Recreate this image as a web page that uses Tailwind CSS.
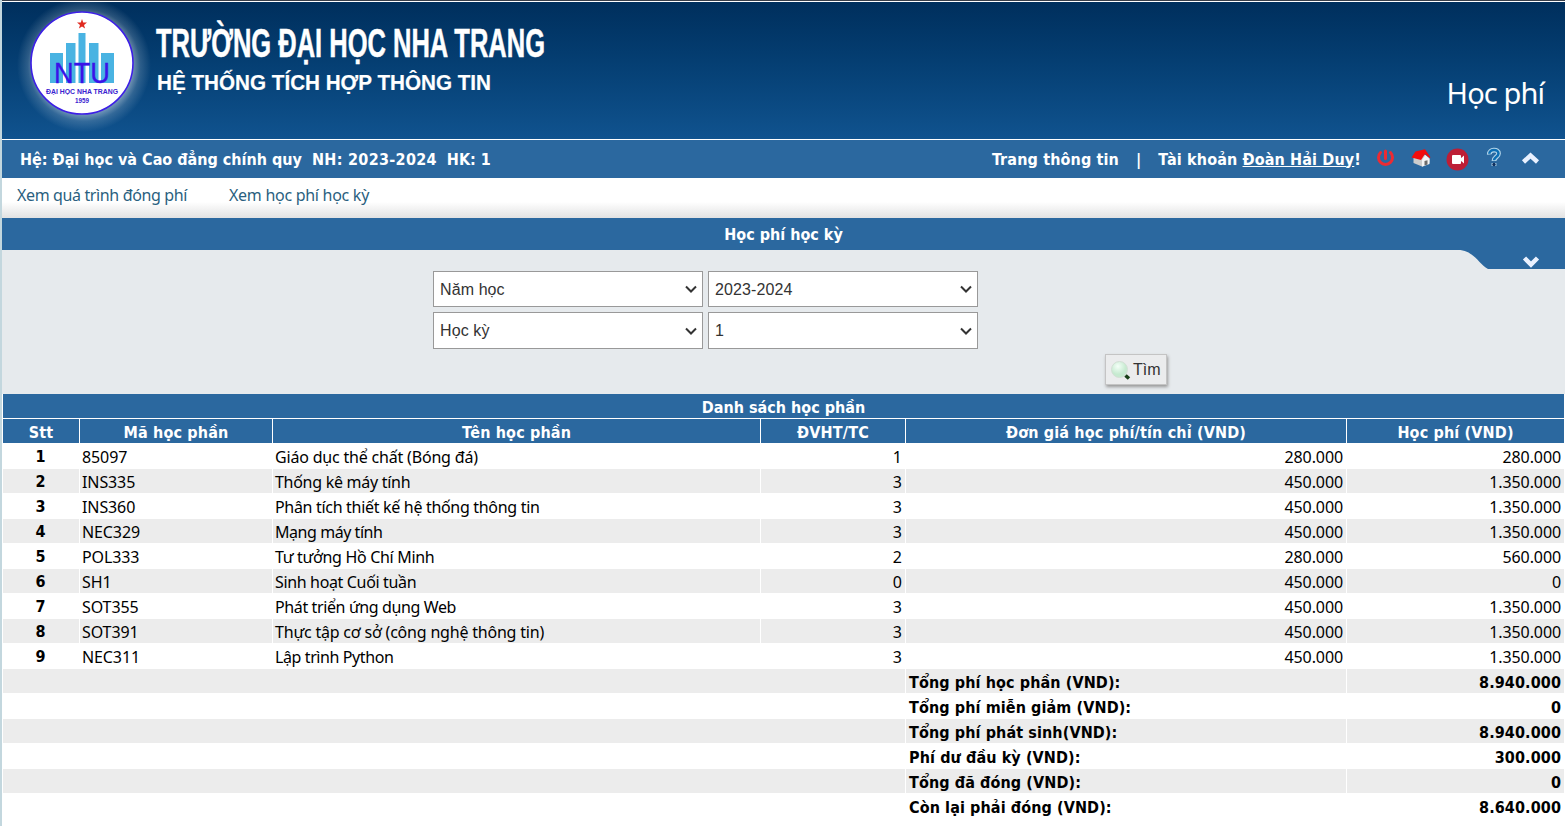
<!DOCTYPE html>
<html lang="vi">
<head>
<meta charset="utf-8">
<title>Học phí</title>
<script src="https://cdn.jsdelivr.net/npm/@tailwindcss/browser@4"></script>
</head>
<body class="h-[826px] overflow-hidden bg-white font-['Noto_Sans',sans-serif] text-[16px] leading-[23px] text-black">
<div class="flex h-[826px] w-[1565px] flex-col border-l-2 border-[#c3d7de]">
  <div class="h-px shrink-0 bg-[#3a3f4a]"></div>
  <header class="flex h-[139px] shrink-0 justify-between border-y border-white bg-linear-to-b from-[#002f5d] to-[#10538f]">
    <div class="flex">
      <svg class="block h-[137px] w-[150px]" viewBox="2 2 150 137">
        <defs><radialGradient id="glow"><stop offset="0.72" stop-color="#fff" stop-opacity=".45"/><stop offset=".84" stop-color="#fff" stop-opacity=".16"/><stop offset="1" stop-color="#fff" stop-opacity="0"/></radialGradient></defs>
        <circle cx="84" cy="65" r="67" fill="url(#glow)"/>
        <circle cx="82" cy="63" r="51" fill="#fff" stroke="#3d1fe6" stroke-width="1.6"/>
        <path fill="#49b3e2" d="M50 53h13v30H50zM66 43h9.500v40H66zM78.500 33h7v50h-7zM89 43h9.500v40H89zM101 53h13v30h-13z"/>
        <path fill="#e02a20" d="M82 19l1.200 3.600h3.800l-3 2.300 1.100 3.700-3.100-2.200-3.100 2.200 1.100-3.700-3-2.300h3.800z"/>
        <text x="54" y="83" textLength="56" lengthAdjust="spacingAndGlyphs" font-family="Liberation Sans" font-size="29" fill="#3a12e8" stroke="#3a12e8" stroke-width=".3">NTU</text>
        <text x="46" y="93.500" textLength="72" lengthAdjust="spacingAndGlyphs" font-family="Liberation Sans" font-weight="700" font-size="7.500" fill="#3a22d0">ĐẠI HỌC NHA TRANG</text>
        <text x="75" y="102.500" textLength="14" lengthAdjust="spacingAndGlyphs" font-family="Liberation Sans" font-weight="700" font-size="6.500" fill="#3a22d0">1959</text>
      </svg>
      <svg class="block h-[137px] w-[420px] overflow-visible" viewBox="152 2 420 137" font-family="Liberation Sans" font-weight="700" fill="#fff">
        <text x="156" y="56.500" textLength="389" lengthAdjust="spacingAndGlyphs" font-size="40.500" stroke="#fff" stroke-width=".5">TRƯỜNG ĐẠI HỌC NHA TRANG</text>
        <text x="157" y="89.500" textLength="334" lengthAdjust="spacingAndGlyphs" font-size="22.500" stroke="#fff" stroke-width=".2">HỆ THỐNG TÍCH HỢP THÔNG TIN</text>
      </svg>
    </div>
    <h1 class="mt-[71px] mr-[21px] text-[29px] leading-10 tracking-[-0.9px] text-white">Học phí</h1>
  </header>

  <div class="flex h-[38px] shrink-0 items-center justify-between bg-[#2b689f] pr-[24px] pl-[18px] font-['DejaVu_Sans_Condensed'] font-bold text-white">
    <div class="mt-px flex gap-[10px]"><span>Hệ: Đại học và Cao đẳng chính quy</span><span class="tracking-[0.3px]">NH: 2023-2024</span><span>HK: 1</span></div>
    <div class="flex items-center tracking-[0.13px]">
      <span>Trang thông tin</span><span class="px-[17px]">|</span><span>Tài khoản <span class="underline">Đoàn Hải Duy</span>!</span>
      <svg class="ml-[15px] block h-[38px] w-[165px]" viewBox="1376 140 165 38">
        <g fill="none" stroke="#ec2b33" stroke-width="3" stroke-linecap="round"><path d="M1380.500 152.500a7 7 0 1 0 10 0M1385.500 151v7.500"/></g>
        <path d="M1413.500 158l8.500-5 7.500 5v4.500l-7.500 4-8.500-3.500z" fill="#ccc"/><path d="M1422 160l3.500-5 4 4v5l-7.500 2.800z" fill="#f4f4f4"/><path d="M1424.500 161l3-.8v4.300l-3 1z" fill="#6b6b6b"/><path d="M1411.500 157.500l4-6 9.500-2.300 5.500 8-1 .8-4.500-4-4 6z" fill="#f20c0c"/>
        <circle cx="1457.500" cy="159.500" r="11" fill="#bd1e36"/><rect x="1452" y="155" width="9" height="9" rx="1" fill="#fff"/><path d="M1460 159l4-3.500v8l-4-3.500z" fill="#fff"/>
        <path d="M1489.300 154.500C1489 149 1498.500 148.500 1498.500 153.500C1498.500 157 1494 157 1494 161M1494 163v3" fill="none" stroke="#b4d6ea" stroke-width="4.800"/>
        <path d="M1489.300 153.700C1489.300 149 1498.500 148.500 1498.500 153.500C1498.500 157 1494 157 1494 160.300" fill="none" stroke="#0d6fb4" stroke-width="2.600"/><circle cx="1494" cy="164.500" r="1.700" fill="#10305f"/>
        <path d="M1523.500 162l7-6.500 7 6.500" fill="none" stroke="#e9f1ff" stroke-width="4.500"/>
      </svg>
    </div>
  </div>

  <nav class="flex h-[40px] shrink-0 gap-[42px] bg-linear-to-b from-white from-60% to-[#e2e2e2] pt-[5px] pl-[15px] leading-6 text-[#2a5f80]">
    <a class="tracking-[-0.37px]">Xem quá trình đóng phí</a><a class="tracking-[-0.28px]">Xem học phí học kỳ</a>
  </nav>

  <h2 class="flex h-[32px] shrink-0 items-center justify-center bg-[#2b689f] pt-px font-['DejaVu_Sans_Condensed'] font-bold text-white">Học phí học kỳ</h2>

  <section class="flex h-[144px] shrink-0 justify-between bg-[#e6eaed] font-['Liberation_Sans'] text-[#333]">
    <div class="grid h-[78px] grid-cols-[270px_270px] grid-rows-[36px_37px] gap-[5px] pt-[21px] pl-[431px]">
      <div class="flex items-center justify-between border border-[#999] bg-white pr-[5px] pl-[6px]"><span class="tracking-[0.1px]">Năm học</span><svg class="h-3 w-3" viewBox="0 0 12 12"><path d="M1 3.500l5 5 5-5" fill="none" stroke="#333" stroke-width="2"/></svg></div>
      <div class="flex items-center justify-between border border-[#999] bg-white pr-[5px] pl-[6px]"><span class="tracking-[0.1px]">2023-2024</span><svg class="h-3 w-3" viewBox="0 0 12 12"><path d="M1 3.500l5 5 5-5" fill="none" stroke="#333" stroke-width="2"/></svg></div>
      <div class="flex items-center justify-between border border-[#999] bg-white pr-[5px] pl-[6px]"><span class="tracking-[0.1px]">Học kỳ</span><svg class="h-3 w-3" viewBox="0 0 12 12"><path d="M1 3.500l5 5 5-5" fill="none" stroke="#333" stroke-width="2"/></svg></div>
      <div class="flex items-center justify-between border border-[#999] bg-white pr-[5px] pl-[6px]"><span>1</span><svg class="h-3 w-3" viewBox="0 0 12 12"><path d="M1 3.500l5 5 5-5" fill="none" stroke="#333" stroke-width="2"/></svg></div>
    </div>
    <div class="flex">
      <button class="mt-[104px] mr-[291px] flex h-[31px] w-[62px] items-center border border-[#c4c4c4] bg-[#ebeced] pl-[4px] shadow-[1px_2px_3px_#999]">
        <svg class="mt-[3px] block h-[22px] w-[21px]" viewBox="0 0 21 22"><defs><radialGradient id="lens" cx=".4" cy=".3"><stop offset="0" stop-color="#f4fff8"/><stop offset="1" stop-color="#c6ead0"/></radialGradient></defs><circle cx="9.500" cy="9.500" r="8" fill="url(#lens)" stroke="#d3dfd5"/><path d="M15.500 15.500l3.500 3" stroke="#173f17" stroke-width="3.600"/></svg>
        <span class="ml-[2px]">Tìm</span>
      </button>
      <svg class="block h-[19px] w-[107px]" viewBox="0 0 107 19"><path d="M0 0C15 0 20 13 30 19H107V0z" fill="#2b689f"/><path d="M66.500 8l6.500 6.500 6.500-6.500" fill="none" stroke="#e9f1ff" stroke-width="4.500"/></svg>
    </div>
  </section>

  <main class="flex w-[1562px] shrink-0 flex-col gap-px pl-px">
    <div class="flex h-6 items-center justify-center bg-[#2b689f] font-['DejaVu_Sans_Condensed'] font-bold text-white"><span class="mt-[2px]">Danh sách học phần</span></div>
    <div class="grid h-6 grid-cols-[76px_192px_487px_144px_440px_217px] gap-px text-center font-['DejaVu_Sans_Condensed'] font-bold tracking-[0.15px] text-white *:h-6 *:bg-[#2b689f] *:pt-[2px]">
      <div>Stt</div><div>Mã học phần</div><div>Tên học phần</div><div>ĐVHT/TC</div><div>Đơn giá học phí/tín chỉ (VND)</div><div>Học phí (VND)</div>
    </div>
    <div id="rows" class="flex flex-col gap-px"></div>
    <div id="totals" class="flex flex-col gap-px"></div>
  </main>
</div>
<script>
  // code, name, name tracking (px), credits, unit price, fee
  const courses = [
    ['85097','Giáo dục thể chất (Bóng đá)',-0.19,'1','280.000','280.000'],
    ['INS335','Thống kê máy tính',-0.28,'3','450.000','1.350.000'],
    ['INS360','Phân tích thiết kế hệ thống thông tin',-0.31,'3','450.000','1.350.000'],
    ['NEC329','Mạng máy tính',-0.45,'3','450.000','1.350.000'],
    ['POL333','Tư tưởng Hồ Chí Minh',-0.32,'2','280.000','560.000'],
    ['SH1','Sinh hoạt Cuối tuần',-0.35,'0','450.000','0'],
    ['SOT355','Phát triển ứng dụng Web',-0.38,'3','450.000','1.350.000'],
    ['SOT391','Thực tập cơ sở (công nghệ thông tin)',-0.2,'3','450.000','1.350.000'],
    ['NEC311','Lập trình Python',-0.4,'3','450.000','1.350.000'],
  ];
  document.getElementById('rows').innerHTML = courses.map((c, i) => {
    const shade = i % 2 ? '*:bg-[#ececec]' : '*:bg-white';
    return `<div class="grid h-6 grid-cols-[76px_192px_487px_144px_440px_217px] gap-px *:h-6 *:pt-[2px] *:pr-[3px] *:pl-[2px] *:leading-[22px] ${shade}">
      <div class="text-center font-['DejaVu_Sans_Condensed'] font-bold">${i + 1}</div><div class="tracking-[-0.1px]">${c[0]}</div><div style="letter-spacing:${c[2]}px">${c[1]}</div>
      <div class="text-right">${c[3]}</div><div class="text-right tracking-[-0.1px]">${c[4]}</div><div class="text-right tracking-[-0.1px]">${c[5]}</div></div>`;
  }).join('');
  const totals = [
    ['Tổng phí học phần (VND):','8.940.000'],
    ['Tổng phí miễn giảm (VND):','0'],
    ['Tổng phí phát sinh(VND):','8.940.000'],
    ['Phí dư đầu kỳ (VND):','300.000'],
    ['Tổng đã đóng (VND):','0'],
    ['Còn lại phải đóng (VND):','8.640.000'],
  ];
  document.getElementById('totals').innerHTML = totals.map((t, i) => {
    const shade = i % 2 ? '*:bg-white' : '*:bg-[#ececec]';
    return `<div class="grid h-6 grid-cols-[902px_440px_217px] gap-px font-['DejaVu_Sans_Condensed'] font-bold tracking-[0.1px] *:h-6 *:px-[3px] *:pt-[2px] ${shade}">
      <div></div><div>${t[0]}</div><div class="text-right">${t[1]}</div></div>`;
  }).join('');
</script>
</body>
</html>
